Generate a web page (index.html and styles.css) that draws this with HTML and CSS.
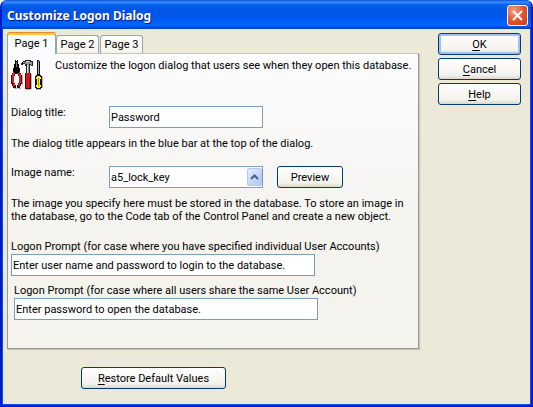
FILE: index.html
```html
<!DOCTYPE html>
<html lang="en">
<head>
<meta charset="utf-8">
<title>Customize Logon Dialog</title>
<link rel="stylesheet" href="styles.css">
</head>
<body>
<div class="window" role="dialog" aria-labelledby="dialog-title">
  <header class="titlebar">
    <h1 class="title" id="dialog-title">Customize Logon Dialog</h1>
    <button class="close" type="button" aria-label="Close">
      <svg width="11" height="11" viewBox="0 0 11 11"><path d="M1 1L10 10M10 1L1 10" stroke="#fff" stroke-width="2"/></svg>
    </button>
  </header>
  <form class="client">
    <div class="main">
      <div class="tabs" role="tablist">
        <button class="tab tab-active" type="button" role="tab" aria-selected="true">Page 1</button>
        <button class="tab" type="button" role="tab" aria-selected="false">Page 2</button>
        <button class="tab" type="button" role="tab" aria-selected="false">Page 3</button>
      </div>
      <section class="panel" role="tabpanel">
        <div class="intro">
          <svg class="tools" width="32" height="32" viewBox="1 0 32 32" shape-rendering="crispEdges">
            <path d="M4 29h3v1H4zM8 29h3v1H8zM16 30h5v1h-5zM21 15h1v15h-1zM26 30h5v1h-5zM32 17h1v12h-1zM12 16h1v10h-1z" fill="#b4b4b4"/>
            <path d="M5 1h1v1h1V1h1v4h1v4h1v4H3V9h1V5h1z" fill="#000"/>
            <path d="M6 3h1v5H6z" fill="#777"/>
            <path d="M3 12h7v2h1v2h1v9h-1v2h-1v2H7v-3h1v-2h1v-7H8v-2H5v2H4v7h1v2h1v3H3v-2H2v-2H1v-9h1v-2h1z" fill="#400"/>
            <path d="M3 13h2v1h3v-1h2v2h1v9h-1v3H8v-2h1v-9H8v-2H5v2H4v9h1v2H3v-3H2v-9h1z" fill="#d82020"/>
            <path d="M4 10h5v4H4z" fill="#000"/>
            <path d="M11 4h1V3h1V2h2V1h6v1h2v5h-2V6h-1v8h-4V7h-1V5h-2v1h-2z" fill="#222"/>
            <path d="M12 4h1V3h3V2h4v1h2v3h-1V5h-2v9h-2V5h-2V4z" fill="#999"/>
            <path d="M16 2h3v1h-3zM17 6h1v8h-1z" fill="#ddd"/>
            <path d="M15 14h6v16h-6z" fill="#500"/>
            <path d="M16 14h4v15h-4z" fill="#d01818"/>
            <path d="M17 16h1v1h-1zM19 18h1v1h-1zM17 20h1v1h-1zM19 22h1v1h-1zM17 24h1v1h-1zM19 26h1v1h-1z" fill="#800"/>
            <path d="M27 1h2v1h1v14h-3z" fill="#111"/>
            <path d="M28 2h1v13h-1z" fill="#aaa"/>
            <path d="M26 16h5v1h1v12h-1v1h-5v-1h-1V17h1z" fill="#111"/>
            <path d="M27 17h3v1h1v2h-1v6h1v2h-1v1h-3v-1h-1v-2h1v-6h-1v-2h1z" fill="#ffee20"/>
            <path d="M28 19h1v8h-1z" fill="#a09000"/>
          </svg>
          <p class="intro-text">Customize the logon dialog that users see when they open this database.</p>
        </div>
        <div class="row">
          <label class="row-label" for="dlg-title">Dialog title:</label>
          <input class="field" id="dlg-title" type="text" value="Password">
        </div>
        <p class="note">The dialog title appears in the blue bar at the top of the dialog.</p>
        <div class="row">
          <label class="row-label" for="image-name">Image name:</label>
          <div class="combo">
            <select class="field" id="image-name"><option>a5_lock_key</option></select>
            <span class="arrow"><svg width="9" height="6" viewBox="0 0 9 6"><path d="M1 5L4.500 1.500L8 5" fill="none" stroke="#4d6185" stroke-width="2"/></svg></span>
          </div>
          <button class="button preview" type="button">Preview</button>
        </div>
        <p class="help">The image you specify here must be stored in the database. To store an image in the database, go to the Code tab of the Control Panel and create a new object.</p>
        <div class="prompt">
          <label for="prompt-individual">Logon Prompt (for case where you have specified individual User Accounts)</label>
          <input class="field wide" id="prompt-individual" type="text" value="Enter user name and password to login to the database.">
        </div>
        <div class="prompt prompt-shared">
          <label for="prompt-shared">Logon Prompt (for case where all users share the same User Account)</label>
          <input class="field wide" id="prompt-shared" type="text" value="Enter password to open the database.">
        </div>
      </section>
      <button class="button restore" type="button"><u>R</u>estore Default Values</button>
    </div>
    <div class="actions">
      <button class="button default" type="button"><u>O</u>K</button>
      <button class="button" type="button"><u>C</u>ancel</button>
      <button class="button" type="button"><u>H</u>elp</button>
    </div>
  </form>
</div>
</body>
</html>
```
FILE: styles.css
```css
* { box-sizing: border-box; }

body {
  margin: 0;
  background: #fff;
  color: #000;
  font: 11px/13px Roboto, Tahoma, sans-serif;
}

h1, p { margin: 0; }

button, input, select { font: inherit; color: inherit; }

u { text-underline-offset: 2px; }

.window {
  display: flex;
  flex-direction: column;
  min-height: 100vh;
  overflow: hidden;
  border-radius: 7px 7px 0 0;
  background: #ece9d8;
  border: 2px solid #0019c8;
  border-top: 0;
  box-shadow: inset 0 0 0 1px #0054f0;
}

.titlebar {
  display: flex;
  align-items: center;
  justify-content: space-between;
  height: 29px;
  margin: 0 -2px;
  padding: 2px 5px 0 7px;
  background: linear-gradient(#0a50d0 0, #3a8cff 2px, #0560ee 5px, #0054e3 10px, #0058ee 18px, #0066ff 25px, #0048d0 28px, #003cc0 29px);
}

.title {
  color: #fff;
  font: bold 12px/16px "Noto Sans", "Trebuchet MS", sans-serif;
  text-shadow: 1px 1px 0 #0a1883;
}

.close {
  display: grid;
  place-items: center;
  width: 21px;
  height: 21px;
  padding: 0;
  border: 1px solid #fff;
  border-radius: 3px;
  background: radial-gradient(circle at 30% 25%, #f0a08a, #e2562e 50%, #c83a10);
}

.client {
  display: flex;
  flex: 1;
  align-items: flex-start;
  gap: 19px;
  padding: 4px 10px 16px 5px;
}

.main {
  flex: 1;
  min-width: 0;
}

.actions {
  display: grid;
  gap: 3px;
  width: 83px;
}

.tabs {
  display: flex;
  align-items: flex-end;
  gap: 1px;
  height: 20px;
}

.tab {
  height: 18px;
  width: 43px;
  padding: 0;
  border: 1px solid #91a7b4;
  border-bottom: 0;
  border-radius: 3px 3px 0 0;
  background: linear-gradient(#fff, #f3f2ea);
}

.tab-active {
  position: relative;
  width: 49px;
  height: 21px;
  margin: 0 -1px -1px 0;
  padding-bottom: 2px;
  border-top: 2px solid #ffc83c;
  background: #fcfcfe;
  box-shadow: 0 -1px 0 #e68b2c;
}

.panel {
  padding: 5px 3px 28px;
  border: 1px solid #919b9c;
  border-top-color: #c8c8b8;
  background: linear-gradient(#fcfcfe, #f4f3ee 60%);
  box-shadow: 1px 1px 1px #c8c5b4;
}

.intro {
  display: flex;
  gap: 12px;
  margin-bottom: 15px;
}

.intro-text { white-space: nowrap; }

.tools { flex: none; }

.row {
  display: flex;
  margin-bottom: 9px;
}

.row-label { width: 98px; }

.field {
  display: block;
  width: 154px;
  height: 22px;
  padding: 0 1px;
  border: 1px solid #7f9db9;
  border-radius: 0;
  background: #fff;
  appearance: none;
}

.wide { width: 304px; }

.note { margin-bottom: 16px; }

.combo { position: relative; }

.arrow {
  position: absolute;
  top: 2px;
  right: 1px;
  display: grid;
  place-items: center;
  width: 15px;
  height: 18px;
  border: 1px solid #b4c8f6;
  border-radius: 2px;
  background: linear-gradient(135deg, #e1eafe, #aec8f7);
  pointer-events: none;
}

.button {
  height: 22px;
  padding: 0;
  border: 1px solid #003c74;
  border-radius: 3px;
  background: linear-gradient(#fff, #f3f2ec 80%, #dcd6cc);
}

.default { box-shadow: inset 0 0 0 2px #a4c0f0; }

.preview {
  width: 66px;
  margin-left: 14px;
}

.help {
  max-width: 400px;
  margin-bottom: 17px;
}

.prompt label {
  display: block;
  margin-bottom: 1px;
}

.prompt-shared {
  margin: 8px 0 0 3px;
}

.restore {
  width: 145px;
  margin: 18px 0 0 74px;
}
```
